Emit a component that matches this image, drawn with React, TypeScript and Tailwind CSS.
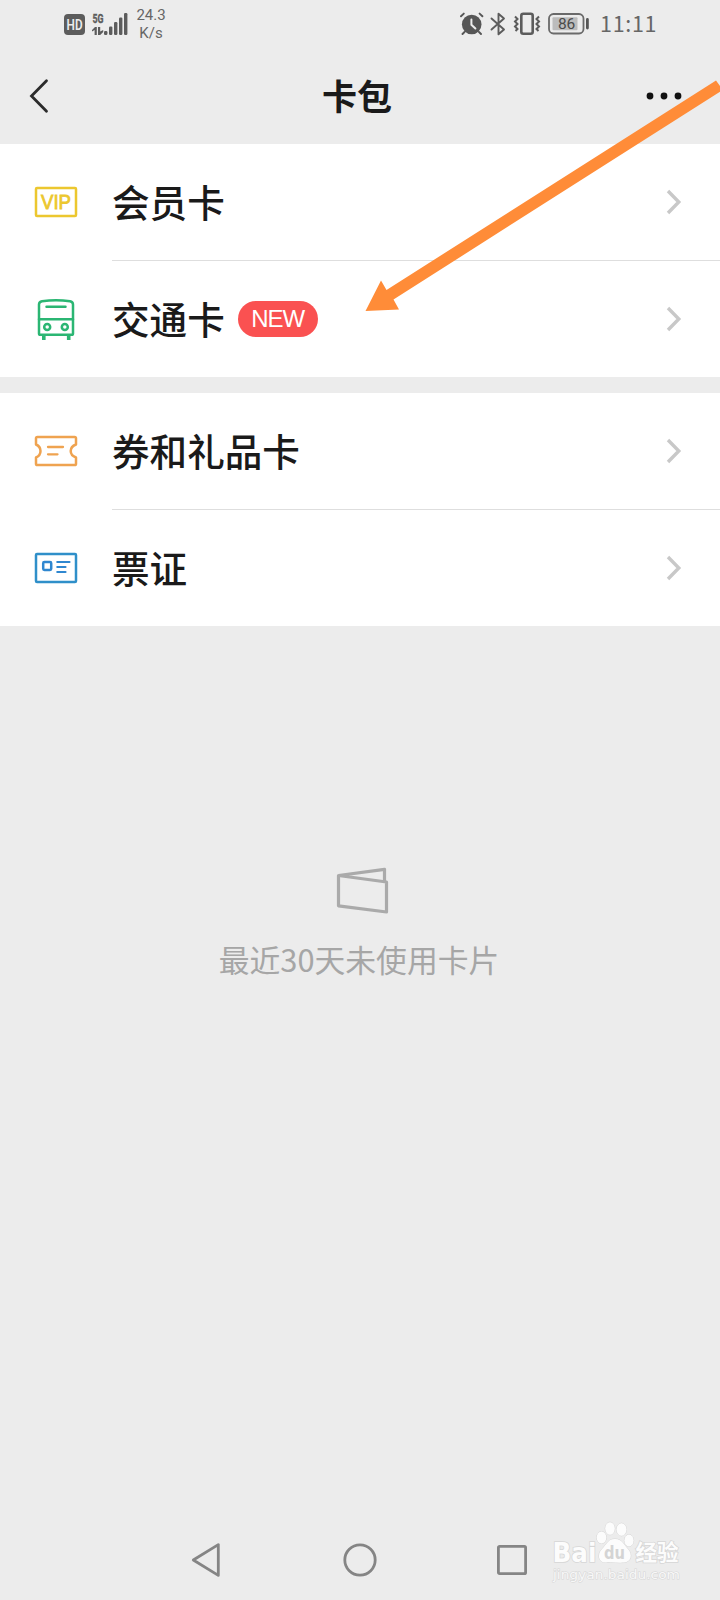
import React from "react";

type IconProps = { className?: string };

type RowProps = {
    icon: React.ReactNode;
    label: string;
    badge?: string;
    divider?: boolean;
};

const HdIcon: React.FC = () => (
    <svg width="21" height="21" viewBox="0 0 21 21">
        <rect width="21" height="21" rx="4" fill="#5c5c5c" />
        <text x="2.6" y="15.7" textLength="16" lengthAdjust="spacingAndGlyphs" fontSize="14.5" fontWeight="600" fill="#ececec" fontFamily="Roboto, sans-serif">HD</text>
    </svg>
);

const SignalIcon: React.FC = () => (
    <svg width="36" height="24" viewBox="0 0 36 24" fill="#5c5c5c">
        <text x="0.5" y="10.5" textLength="11" lengthAdjust="spacingAndGlyphs" fontSize="13" fontWeight="700" stroke="#5c5c5c" strokeWidth="0.4" fontFamily="Roboto, sans-serif">5G</text>
        <path d="M0 18L3 15h1.8v8H2.6v-5L0 19.500zM6 15h2.200v4.500l3-1.500v2L8.200 23H6z" />
        <rect x="12" y="19" width="3.4" height="4" rx="1.2" />
        <rect x="17" y="14.5" width="3.4" height="8.5" rx="1.2" />
        <rect x="22" y="10" width="3.4" height="13" rx="1.2" />
        <rect x="27" y="5.5" width="3.4" height="17.5" rx="1.2" />
        <rect x="32" y="1" width="3.4" height="22" rx="1.2" />
    </svg>
);

const AlarmIcon: React.FC = () => (
    <svg width="24" height="24" viewBox="0 0 24 24" fill="none" strokeLinecap="round" stroke="#565656">
        <circle cx="11.700" cy="12.5" r="9.8" fill="#565656" stroke="none" />
        <path d="M1 4.300L3.800 1.600M22.400 4.300L19.600 1.600M4.500 20l-2 2M19 20l2 2" strokeWidth="1.9" />
        <path d="M11.400 7.500v5.200l4 3.800" stroke="#ececec" strokeWidth="2" />
    </svg>
);

const BluetoothIcon: React.FC = () => (
    <svg width="16" height="24" viewBox="0 0 16 24" fill="none" stroke="#5c5c5c" strokeWidth="1.9" strokeLinejoin="round" strokeLinecap="round">
        <path d="M1.500 6.500L14 17.500L8.500 22.300V1.700L14 6.500L1.500 17.500" />
    </svg>
);

const VibrateIcon: React.FC = () => (
    <svg width="28" height="24" viewBox="0 0 28 24" fill="none" stroke="#5c5c5c">
        <rect x="8.300" y="1.800" width="11.400" height="20" rx="2" strokeWidth="2.6" />
        <path d="M2 4.500l2.500 2.500-2.500 2.500 2.500 2.500-2.500 2.500 2.500 2.500-2 2M26 4.500l-2.500 2.500 2.500 2.500-2.500 2.500 2.500 2.500-2.500 2.500 2 2" strokeWidth="2" />
    </svg>
);

const BatteryIcon: React.FC = () => (
    <svg width="42" height="22" viewBox="0 0 42 22">
        <rect x="1" y="1" width="34.5" height="19.5" rx="4.5" fill="none" stroke="#6a6a6a" strokeWidth="1.8" />
        <rect x="4.5" y="4.2" width="25" height="13" rx="1" fill="#bcbcbc" />
        <rect x="38" y="5" width="2.8" height="11.5" rx="1.4" fill="#565656" />
        <text x="18.6" y="16.2" textAnchor="middle" fontSize="15.5" fill="#4a4a4a" fontFamily="Roboto, sans-serif">86</text>
    </svg>
);

const VipIcon: React.FC = () => (
    <svg width="44" height="44" viewBox="0 0 44 44">
        <rect x="2" y="7.900" width="40" height="28.200" rx="1" fill="none" stroke="#ecc72f" strokeWidth="2.500" />
        <text x="7" y="28.900" textLength="30" lengthAdjust="spacingAndGlyphs" fontSize="19.500" fill="#ecc72f" stroke="#ecc72f" strokeWidth="0.800" fontFamily="'Liberation Sans', sans-serif">VIP</text>
    </svg>
);

const BusIcon: React.FC = () => (
    <svg width="44" height="44" viewBox="0 0 44 44" fill="none" stroke="#2bb673" strokeWidth="2.500" strokeLinejoin="round">
        <path d="M5 36.500V7.500Q5 4.600 8 4.200Q22 2.200 36 4.200Q39 4.600 39 7.500V36.500Q39 37.800 37.700 37.800H6.300Q5 37.800 5 36.500Z" />
        <path d="M5 22.200h34M12.500 9.800h19" strokeLinecap="round" />
        <circle cx="13.200" cy="30" r="3" />
        <circle cx="30.800" cy="30" r="3" />
        <path d="M9.800 38v5M34.700 38v5" strokeWidth="3.600" />
    </svg>
);

const CouponIcon: React.FC = () => (
    <svg width="44" height="44" viewBox="0 0 44 44" fill="none" stroke="#efa350" strokeWidth="2.500" strokeLinejoin="round" strokeLinecap="round">
        <path d="M3.400 7.900H40.600Q42 7.900 42 9.300V15.500Q36.700 17.500 36.700 22T42 28.500V34.700Q42 36.100 40.600 36.100H3.400Q2 36.100 2 34.700V28.500Q6.500 26.500 6.500 22T2 15.500V9.300Q2 7.900 3.400 7.900Z" />
        <path d="M14 18h15M14 25.300h9.500" strokeWidth="2.300" />
    </svg>
);

const TicketIcon: React.FC = () => (
    <svg width="44" height="44" viewBox="0 0 44 44" fill="none" stroke="#2f8fc9" strokeWidth="2.500" strokeLinejoin="round">
        <rect x="2" y="8" width="40" height="28" rx="1" />
        <rect x="9.200" y="16" width="8" height="8" rx="1.200" stroke="#2f87d0" />
        <path d="M23.300 16h12.200M23.300 21h8.200M23.300 26h8.200" stroke="#2f87d0" strokeLinecap="round" strokeWidth="2.200" />
    </svg>
);

const Chevron: React.FC<IconProps> = ({ className }) => (
    <svg className={className} width="18" height="28" viewBox="0 0 18 28" fill="none" stroke="#c8c8c8" strokeWidth="3.4">
        <path d="M2 3L12.800 14L2 25" />
    </svg>
);

const StatusBar: React.FC = () => {
    return (
        <div className="flex h-12 items-center pl-16 pr-[64px] text-[#666]">
            <HdIcon />
            <div className="ml-[7px]"><SignalIcon /></div>
            <div className="ml-[8px] flex w-[30px] flex-col items-center font-[Roboto] text-[15px] leading-[18px]">
                <span>24.3</span>
                <span>K/s</span>
            </div>
            <div className="ml-auto flex items-center">
                <AlarmIcon />
                <div className="ml-[6px]"><BluetoothIcon /></div>
                <div className="ml-[7px]"><VibrateIcon /></div>
                <div className="ml-[7px]"><BatteryIcon /></div>
                <span className="-mt-[3px] ml-[10px] w-[56px] whitespace-nowrap font-['Noto_Sans_CJK_SC',sans-serif] text-[21.5px] leading-6 tracking-[0.7px]">11:11</span>
            </div>
        </div>
    );
};

const Header: React.FC = () => {
    return (
        <div className="flex h-24 items-center pl-7 pr-[36px] text-[#1a1a1a]">
            <svg width="22" height="36" viewBox="0 0 22 36" fill="none" stroke="#2b2b2b" strokeWidth="2.8" strokeLinecap="round">
                <path d="M18.500 2.700L3.500 18L18.500 33.300" />
            </svg>
            <h1 className="mx-auto -mt-1 pl-[18px] text-[35px] font-bold leading-none">卡包</h1>
            <svg width="38" height="10" viewBox="0 0 38 10" fill="#111">
                <circle cx="4" cy="5" r="3.4" />
                <circle cx="18" cy="5" r="3.4" />
                <circle cx="32" cy="5" r="3.4" />
            </svg>
        </div>
    );
};

const Row: React.FC<RowProps> = ({ icon, label, badge, divider }) => {
    return (
        <div className="flex bg-white pl-[34px]">
            <div className="flex h-[116px] w-[78px] items-center">{icon}</div>
            <div className={divider ? "flex h-[117px] flex-1 items-center border-b border-[#dedede] pr-[36px]" : "flex h-[116px] flex-1 items-center pr-[36px]"}>
                <span className="-mt-[3px] text-[37.6px] font-medium leading-none text-[#1a1a1a]">{label}</span>
                {badge && (
                    <span className="ml-[13px] flex h-9 w-20 items-center justify-center rounded-full bg-[#fa5151] font-['Liberation_Sans',sans-serif] text-2xl tracking-[-1px] text-white">
                        {badge}
                    </span>
                )}
                <Chevron className="ml-auto" />
            </div>
        </div>
    );
};

const EmptyState: React.FC = () => {
    return (
        <div className="flex flex-col items-center pt-[240px] text-[#a6a6a6]">
            <svg className="ml-[3px]" width="54" height="48" viewBox="0 0 54 48" fill="none" stroke="#aaa" strokeWidth="3.2" strokeLinejoin="round">
                <path d="M3.500 9.500L51.500 16V46L3.500 39.800ZM3.500 9.500L49.500 3.300V15.700" />
            </svg>
            <p className="mt-[27px] text-[30.800px] leading-[36px] -ml-[2px]">最近30天未使用卡片</p>
        </div>
    );
};

const NavBar: React.FC = () => {
    return (
        <div className="mt-auto flex h-20 items-center pl-[190px]">
            <svg width="32" height="36" viewBox="0 0 32 36" fill="none" stroke="#858585" strokeWidth="2.8" strokeLinejoin="round">
                <path d="M28.300 2.600V33.400L3.300 18Z" />
            </svg>
            <svg className="ml-[121px]" width="34" height="34" viewBox="0 0 34 34" fill="none" stroke="#858585" strokeWidth="2.8">
                <circle cx="17" cy="17" r="15.2" />
            </svg>
            <svg className="ml-[120px]" width="30" height="30" viewBox="0 0 30 30" fill="none" stroke="#858585" strokeWidth="2.8">
                <rect x="1.4" y="1.4" width="27.2" height="27.2" rx="1.2" />
            </svg>
        </div>
    );
};

// orange pointer that sits over the header and the first rows
const PointerArrow: React.FC = () => (
    <svg className="pointer-events-none absolute right-0 top-[70px]" width="360" height="250" viewBox="360 70 360 250" fill="#ff8c38">
        <path d="M365.500 311L381 280.500L386.500 290L716 80.500L721 87.500V91L393.500 299.500L399 309.500Z" />
    </svg>
);

const Watermark: React.FC = () => (
    <svg className="absolute right-[36px] top-[1520px]" width="134" height="70" viewBox="550 1520 134 70" fill="#fcfcfc" stroke="#d6d6d6" strokeWidth="1" paintOrder="stroke">
        <text x="552.500" y="1561.500" textLength="44" lengthAdjust="spacingAndGlyphs" fontSize="27" fontWeight="700" strokeWidth="1.600" fontFamily="'DejaVu Sans', sans-serif">Bai</text>
        <ellipse cx="601.500" cy="1537.500" rx="4.800" ry="6" />
        <ellipse cx="610" cy="1528.500" rx="4.800" ry="6.300" />
        <ellipse cx="621.500" cy="1529.500" rx="5" ry="6.300" />
        <ellipse cx="629" cy="1540.500" rx="4.600" ry="6" />
        <path d="M615 1539C622 1539 624 1545 628 1549C633 1555 631 1562 624 1562.500C619 1563 612 1562 606 1562.500C598 1563 597 1554 602 1549C607 1544 608 1539 615 1539Z" />
        <text x="604" y="1559" textLength="21" lengthAdjust="spacingAndGlyphs" fontSize="18" fontWeight="700" fill="#d4d4d4" stroke="none" fontFamily="'DejaVu Sans', sans-serif">du</text>
        <text x="635.500" y="1560" textLength="43" lengthAdjust="spacingAndGlyphs" fontSize="21.500" fontWeight="700" strokeWidth="1.600" fontFamily="'Noto Sans CJK SC', sans-serif">经验</text>
        <text x="553" y="1579" textLength="127" lengthAdjust="spacingAndGlyphs" fontSize="12.500" fill="#f8f8f8" strokeWidth="1" fontFamily="'DejaVu Sans', sans-serif">jingyan.baidu.com</text>
    </svg>
);

export default function App() {
    return (
        <div className="relative flex h-[1600px] w-[720px] flex-col overflow-hidden bg-[#ececec] font-['Noto_Sans_CJK_SC',sans-serif]">
            <StatusBar />
            <Header />
            <div className="flex flex-col gap-4">
                <div>
                    <Row icon={<VipIcon />} label="会员卡" divider />
                    <Row icon={<BusIcon />} label="交通卡" badge="NEW" />
                </div>
                <div>
                    <Row icon={<CouponIcon />} label="券和礼品卡" divider />
                    <Row icon={<TicketIcon />} label="票证" />
                </div>
            </div>
            <EmptyState />
            <NavBar />
            <PointerArrow />
            <Watermark />
        </div>
    );
}
